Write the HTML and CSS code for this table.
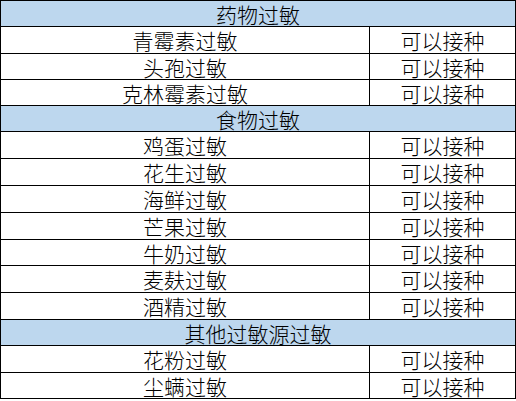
FILE: index.html
```html
<!DOCTYPE html>
<html lang="zh">
<head>
<meta charset="utf-8">
<link rel="stylesheet" href="styles.css">
</head>
<body>
<div class="sheet">
  <div class="cell head">药物过敏</div>
  <div class="cell">青霉素过敏</div><div class="cell">可以接种</div>
  <div class="cell">头孢过敏</div><div class="cell">可以接种</div>
  <div class="cell">克林霉素过敏</div><div class="cell">可以接种</div>
  <div class="cell head">食物过敏</div>
  <div class="cell">鸡蛋过敏</div><div class="cell">可以接种</div>
  <div class="cell">花生过敏</div><div class="cell">可以接种</div>
  <div class="cell">海鲜过敏</div><div class="cell">可以接种</div>
  <div class="cell">芒果过敏</div><div class="cell">可以接种</div>
  <div class="cell">牛奶过敏</div><div class="cell">可以接种</div>
  <div class="cell">麦麸过敏</div><div class="cell">可以接种</div>
  <div class="cell">酒精过敏</div><div class="cell">可以接种</div>
  <div class="cell head">其他过敏源过敏</div>
  <div class="cell">花粉过敏</div><div class="cell">可以接种</div>
  <div class="cell">尘螨过敏</div><div class="cell">可以接种</div>
</div>
</body>
</html>
```
FILE: styles.css
```css
html, body {
  margin: 0;
  padding: 0;
  background: #ffffff;
}
.sheet {
  display: grid;
  width: 514px;
  grid-template-columns: 368px 145px;
  grid-template-rows: 25px 26px 25px 25px 25px 26px 26px 26px 26px 25px 26px 26px 25px 26px 25px;
  gap: 1px;
  padding: 1px;
  background: #000000;
  font-family: "Noto Sans CJK SC", "Noto Sans", sans-serif;
  font-weight: 300;
  font-size: 21px;
  color: #000000;
}
.cell {
  background: #ffffff;
  display: flex;
  align-items: center;
  justify-content: center;
  line-height: 21px;
  padding-top: 1px;
  box-sizing: border-box;
  white-space: nowrap;
}
.head {
  grid-column: 1 / span 2;
  background: #bdd7ee;
}
```
